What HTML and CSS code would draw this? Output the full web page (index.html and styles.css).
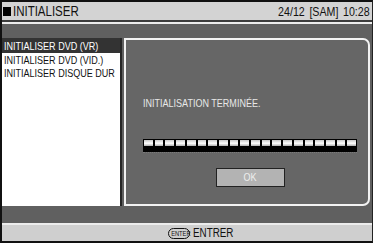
FILE: index.html
```html
<!DOCTYPE html>
<html>
<head>
<meta charset="utf-8">
<link rel="stylesheet" href="styles.css">
</head>
<body>
<div class="screen">
  <div class="topbar">
    <span class="title"><span class="sq"></span><span class="n">INITIALISER</span></span>
    <span class="date"><span class="n nr">24/12 [SAM] 10:28</span></span>
  </div>
  <div class="main">
    <ul class="menu">
      <li class="sel"><span class="n">INITIALISER DVD (VR)</span></li>
      <li><span class="n">INITIALISER DVD (VID.)</span></li>
      <li><span class="n">INITIALISER DISQUE DUR</span></li>
    </ul>
    <div class="dialog">
      <p class="msg"><span class="n">INITIALISATION TERMINÉE.</span></p>
      <div class="progress">
        <span></span><span></span><span></span><span></span><span></span>
        <span></span><span></span><span></span><span></span><span></span>
        <span></span><span></span><span></span><span></span><span></span>
        <span></span><span></span><span></span><span></span><span></span>
      </div>
      <div class="ok"><span class="n nc">OK</span></div>
    </div>
  </div>
  <div class="footer"><span class="key"><span class="n nc">ENTER</span></span><span class="label"><span class="n">ENTRER</span></span></div>
</div>
</body>
</html>
```
FILE: styles.css
```css
html, body { margin: 0; padding: 0; background: #000; }
.screen {
  width: 373px; height: 243px; box-sizing: border-box;
  border-top: 2px solid #111; border-left: 2px solid #111;
  border-right: 1px solid #222; border-bottom: 2px solid #111;
  display: flex; flex-direction: column;
  background: #606060;
  font-family: "Liberation Sans", Arial, sans-serif;
  color: #111;
}
.n {
  display: inline-block; white-space: nowrap;
  transform: scaleX(0.82); transform-origin: 0 50%;
}
.n.nr { transform-origin: 100% 50%; }
.n.nc { transform-origin: 50% 50%; }
.topbar {
  height: 18px; flex: none;
  background: #d3d3d3;
  border-bottom: 2px solid #3c3c3c;
  display: flex; align-items: center; justify-content: space-between;
  padding: 0 2px 0 1px;
}
.title { display: flex; align-items: center; font-size: 14px; }
.sq { width: 8px; height: 9px; background: #000; margin-right: 2px; }
.date { font-size: 13px; word-spacing: 2px; }
.main {
  flex: 1; display: flex;
  border-top: 2px solid #ececec;
  padding: 14px 2px 17px 0;
}
.menu {
  list-style: none; margin: 0; padding: 0;
  width: 118px; background: #fff;
  border-right: 2px solid #262626;
  font-size: 11px;
}
.menu li { height: 13px; line-height: 14px; padding-left: 2px; white-space: nowrap; }
.menu li.sel { background: #333; color: #fff; height: 15px; line-height: 16px; }
.dialog {
  flex: 1; margin-left: 2px;
  border: 2px solid #f2f2f2; border-radius: 0 7px 7px 0;
  background: #666;
  padding: 56px 11px 0 17px;
  display: flex; flex-direction: column;
}
.msg { margin: 0; font-size: 11px; line-height: 14px; color: #e8e8e8; }
.progress {
  margin-top: 29px; height: 13px; display: flex;
  border-bottom: 1px dotted #7a7a7a;
}
.progress span {
  flex: 1; box-sizing: border-box;
  border: 1px solid #000;
  background: linear-gradient(#c8c8c8 0, #fff 30%, #bdbdbd 50%, #000 52%, #000 100%);
}
.ok {
  align-self: center; margin-top: 15px;
  width: 69px; height: 19px; box-sizing: border-box;
  background: #b3b3b3; border: 1px solid #222;
  color: #eee; font-size: 11px; line-height: 17px; text-align: center;
}
.footer {
  height: 16px; flex: none;
  background: #cfcfcf; border-top: 2px solid #ececec;
  display: flex; align-items: center; justify-content: center;
  padding-left: 26px;
}
.key {
  font-size: 7px; line-height: 9px; height: 9px; width: 20px;
  text-align: center;
  border: 1px solid #111; border-radius: 6px;
  margin-right: 3px;
}
.label { font-size: 12px; width: 40px; }
```
